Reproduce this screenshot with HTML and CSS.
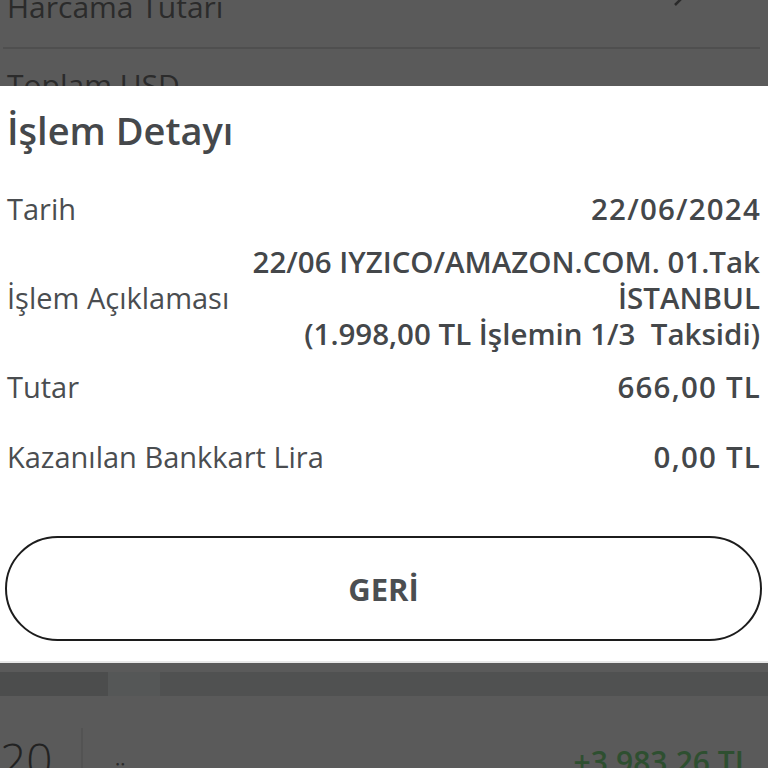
FILE: index.html
```html
<!DOCTYPE html>
<html lang="tr">
<head>
    <meta charset="UTF-8">
    <meta name="viewport" content="width=device-width, initial-scale=1.0">
    <title>İşlem Detayı</title>
    <link rel="stylesheet" href="styles.css">
</head>
<body>
    <div class="arka-ust">
        <div class="arka-satir ilk">
            <span>Harcama Tutarı</span>
            <svg class="ok" width="14" height="24" viewBox="0 0 14 24"><path d="M2 2 L12 12 L2 22" fill="none" stroke="#2a2a2a" stroke-width="2.5"/></svg>
        </div>
        <div class="arka-cizgi"></div>
        <div class="arka-satir">
            <span>Toplam USD</span>
        </div>
    </div>

    <div class="panel">
        <h1>İşlem Detayı</h1>
        <div class="satir">
            <span class="etiket">Tarih</span>
            <span class="deger sayi">22/06/2024</span>
        </div>
        <div class="satir">
            <span class="etiket">İşlem Açıklaması</span>
            <span class="deger">22/06 IYZICO/AMAZON.COM. 01.Tak<br>İSTANBUL<br>(1.998,00 TL İşlemin 1/3&nbsp; Taksidi)</span>
        </div>
        <div class="satir genis">
            <span class="etiket">Tutar</span>
            <span class="deger sayi">666,00 TL</span>
        </div>
        <div class="satir son">
            <span class="etiket">Kazanılan Bankkart Lira</span>
            <span class="deger sayi">0,00 TL</span>
        </div>
        <button class="geri">GERİ</button>
    </div>

    <div class="arka-alt">
        <div class="sekmeler">
            <div class="sekme"></div>
            <div class="sekme secili"></div>
        </div>
        <div class="hareket">
            <div class="gun">20</div>
            <div class="hareket-ad">Ü</div>
            <div class="hareket-tutar">+3.983,26 TL</div>
        </div>
    </div>
</body>
</html>
```

FILE: styles.css
```css
* {
    box-sizing: border-box;
    margin: 0;
    padding: 0;
}
body {
    width: 768px;
    height: 768px;
    overflow: hidden;
    background-color: #5a5a5a;
    font-family: "Open Sans", "Noto Sans", sans-serif;
    color: #46494c;
}

/* arkadaki sayfa, karartilmis */
.arka-ust {
    height: 86px;
    overflow: hidden;
    padding: 0 8px 0 7px;
    color: #2b2b2b;
}
.arka-satir {
    display: flex;
    justify-content: space-between;
    align-items: center;
    font-size: 30px;
    line-height: 40px;
}
.arka-satir.ilk {
    margin-top: -13px;
}
.ok {
    margin-right: 73px;
    margin-top: -24px;
}
.arka-cizgi {
    height: 2px;
    background-color: #4f4f4f;
    margin: 20px 0 16px -4px;
}

.panel {
    background-color: #ffffff;
    padding: 20px 8px 20px 7px;
    border-bottom: 2px solid #e8e8e8;
}
h1 {
    font-size: 38px;
    font-weight: 600;
    line-height: 48px;
    color: #45484b;
    margin-bottom: 37px;
}
.satir {
    display: flex;
    justify-content: space-between;
    align-items: center;
    font-size: 29px;
    line-height: 36px;
    margin-bottom: 17px;
}
.satir.genis {
    margin-bottom: 34px;
}
.satir.son {
    margin-bottom: 61px;
}
.etiket {
    color: #4a4d50;
}
.deger {
    text-align: right;
    font-size: 29.5px;
    font-weight: 600;
    color: #44474a;
}
.sayi {
    letter-spacing: 1.2px;
    margin-right: -1px;
}
.geri {
    display: block;
    width: 757px;
    height: 105px;
    margin-left: -2px;
    border: 2px solid #1c1c1c;
    border-radius: 53px;
    background-color: #ffffff;
    font-family: inherit;
    font-size: 31px;
    font-weight: 700;
    color: #4b4e51;
}

.arka-alt {
    padding-top: 9px;
}
.sekmeler {
    display: flex;
    height: 24px;
    background-color: #505151;
}
.sekme {
    width: 108px;
    background-color: #4c4d4d;
}
.sekme.secili {
    width: 52px;
    background-color: #555757;
}
.hareket {
    display: flex;
    align-items: flex-start;
    margin-top: 32px;
    height: 40px;
    overflow: hidden;
}
.gun {
    width: 83px;
    height: 40px;
    border-right: 2px solid #535353;
    padding-top: 1px;
    font-size: 46px;
    font-weight: 300;
    line-height: 60px;
    color: #222222;
}
.hareket-ad {
    flex: 1;
    padding: 31px 0 0 27px;
    font-size: 28px;
    line-height: 36px;
    color: #2a2a2a;
}
.hareket-tutar {
    padding: 14px 17px 0 0;
    font-size: 30px;
    font-weight: 600;
    line-height: 40px;
    color: #2e4f30;
}
```
